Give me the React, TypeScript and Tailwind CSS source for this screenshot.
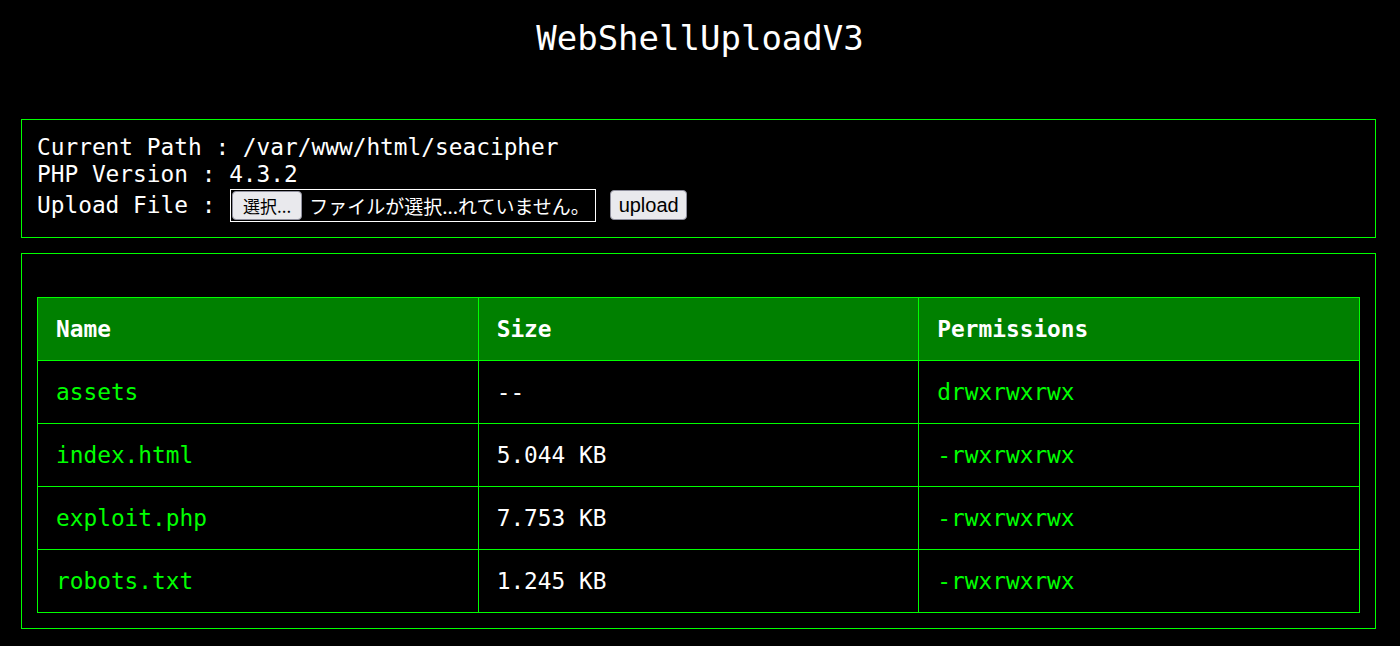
import React from "react";

const mono = "font-['DejaVu_Sans_Mono',Menlo,monospace]";

const rows = [
  { name: "assets", size: "--", perm: "drwxrwxrwx" },
  { name: "index.html", size: "5.044 KB", perm: "-rwxrwxrwx" },
  { name: "exploit.php", size: "7.753 KB", perm: "-rwxrwxrwx" },
  { name: "robots.txt", size: "1.245 KB", perm: "-rwxrwxrwx" },
];

export default function App() {
  return (
    <div className={`min-h-[646px] w-full bg-black text-white ${mono}`}>
      <div className="flex h-[75px] items-center justify-center text-[34px] leading-none">
        WebShellUploadV3
      </div>
      <div className="ml-[21px] mr-[24px] mt-[44px] border border-[#00ff00] px-[15px] pt-[14px] pb-[15px] text-[22.8px] leading-[27px]">
        <div>Current Path : /var/www/html/seacipher</div>
        <div>PHP Version : 4.3.2</div>
        <div className="flex h-[34px] items-center">
          <span className="whitespace-pre">Upload File : </span>
          <div className="ml-[1px] flex h-[33px] w-[366px] items-center border border-white bg-black font-['Noto_Sans_CJK_JP','Noto_Sans',sans-serif] text-[19px]">
            <span className="ml-[1px] flex h-[29px] w-[70px] items-center justify-center rounded-[4px] border border-[#8f8f9d] bg-[#e9e9ed] text-[17px] text-black leading-none">
              選択...
            </span>
            <span className="ml-[7px] leading-none text-white whitespace-nowrap">ファイルが選択...れていません。</span>
          </div>
          <span className="ml-[14px] flex h-[30px] w-[77px] items-center justify-center rounded-[4px] border border-[#8f8f9d] bg-[#e9e9ed] font-['Liberation_Sans',Arial,sans-serif] text-[20px] leading-none text-black">
            upload
          </span>
        </div>
      </div>
      <div className="ml-[21px] mr-[24px] mt-[15px] border border-[#00ff00] px-[15px] pt-[43px] pb-[15px]">
        <table className="w-full table-fixed border-separate border-spacing-0 border-l border-t border-[#00ff00] text-[22.8px] leading-[27px]">
          <thead>
            <tr className="h-[63px] bg-[#008000]">
              <th className="border-b border-r border-[#00ff00] px-[18px] text-left font-bold">Name</th>
              <th className="border-b border-r border-[#00ff00] px-[18px] text-left font-bold">Size</th>
              <th className="border-b border-r border-[#00ff00] px-[18px] text-left font-bold">Permissions</th>
            </tr>
          </thead>
          <tbody>
            {rows.map((r) => (
              <tr key={r.name} className="h-[63px]">
                <td className="border-b border-r border-[#00ff00] px-[18px] text-[#00ff00]">{r.name}</td>
                <td className="border-b border-r border-[#00ff00] px-[18px] text-white">{r.size}</td>
                <td className="border-b border-r border-[#00ff00] px-[18px] text-[#00ff00]">{r.perm}</td>
              </tr>
            ))}
          </tbody>
        </table>
      </div>
    </div>
  );
}
